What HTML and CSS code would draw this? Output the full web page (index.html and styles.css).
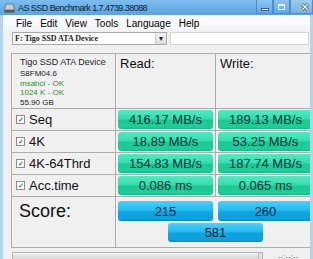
FILE: index.html
```html
<!DOCTYPE html>
<html lang="en">
  <head>
    <meta charset="UTF-8" />
    <title>AS SSD Benchmark</title>
    <link rel="stylesheet" href="styles.css">
  </head>
  <body>
    <div class="window">
      <div class="titlebar">
        <svg class="app-icon" width="11" height="11" viewBox="0 0 11 11">
          <path d="M2 2 L9 2 L10.5 8 L0.5 8 Z" fill="#c9ccd0" stroke="#6c6f73" stroke-width="0.8" />
          <rect x="0.5" y="8" width="10" height="2.5" fill="#55585c" />
        </svg>
        <span class="title">AS SSD Benchmark 1.7.4739.38088</span>
        <div class="caption-buttons">
          <span class="cap-btn"><span class="glyph-min"></span></span>
          <span class="cap-btn"><span class="glyph-max"></span></span>
          <span class="cap-btn close">
            <svg width="8" height="8" viewBox="0 0 8 8">
              <path d="M1 1 L7 7 M7 1 L1 7" stroke="#3a4a5a" stroke-width="2.6" />
              <path d="M1 1 L7 7 M7 1 L1 7" stroke="#f4f6f8" stroke-width="1.4" />
            </svg>
          </span>
        </div>
      </div>
      <div class="frame">
        <div class="menubar">
          <span>File</span>
          <span>Edit</span>
          <span>View</span>
          <span>Tools</span>
          <span>Language</span>
          <span>Help</span>
        </div>
        <div class="toolbar">
          <div class="drive-select">
            <span class="drive-name">F: Tigo SSD ATA Device</span>
            <span class="drop-btn">&#9662;</span>
          </div>
          <div class="textbox"></div>
        </div>
        <div class="results">
          <div class="cell info">
            <div class="device">Tigo SSD ATA Device</div>
            <div>S8FM04.6</div>
            <div class="ok">msahci - OK</div>
            <div class="ok">1024 K - OK</div>
            <div>55.90 GB</div>
          </div>
          <div class="cell head">Read:</div>
          <div class="cell head">Write:</div>

          <div class="cell label"><span class="check">&#10003;</span>Seq</div>
          <div class="cell value"><div class="bar">416.17 MB/s</div></div>
          <div class="cell value"><div class="bar">189.13 MB/s</div></div>

          <div class="cell label"><span class="check">&#10003;</span>4K</div>
          <div class="cell value"><div class="bar">18.89 MB/s</div></div>
          <div class="cell value"><div class="bar">53.25 MB/s</div></div>

          <div class="cell label"><span class="check">&#10003;</span>4K-64Thrd</div>
          <div class="cell value"><div class="bar">154.83 MB/s</div></div>
          <div class="cell value"><div class="bar">187.74 MB/s</div></div>

          <div class="cell label"><span class="check">&#10003;</span>Acc.time</div>
          <div class="cell value"><div class="bar">0.086 ms</div></div>
          <div class="cell value"><div class="bar">0.065 ms</div></div>

          <div class="cell score-label">Score:</div>
          <div class="cell score-values">
            <div class="score-pair">
              <div class="score">215</div>
              <div class="score">260</div>
            </div>
            <div class="score total">581</div>
          </div>
        </div>
        <div class="statusbar">
          <div class="progress"><span class="progress-end"></span></div>
          <span class="timer">--:--:--</span>
        </div>
      </div>
    </div>
  </body>
</html>
```

FILE: styles.css
```css
* {
  box-sizing: border-box;
}

body {
  margin: 0;
  width: 313px;
  height: 259px;
  overflow: hidden;
  font-family: "Liberation Sans", Arial, sans-serif;
  background-color: #f0f0f0;
}

.window {
  width: 313px;
  height: 259px;
  display: flex;
  flex-direction: column;
  overflow: hidden;
}

/* title bar */
.titlebar {
  height: 15px;
  flex: none;
  display: flex;
  align-items: center;
  padding-left: 4px;
  background: linear-gradient(#7dbcee, #5aa4e3);
}

.app-icon {
  flex: none;
}

.title {
  margin-left: 3px;
  font-size: 9px;
  letter-spacing: -0.55px;
  color: #10202f;
}

.caption-buttons {
  margin-left: auto;
  align-self: flex-start;
  display: flex;
  height: 14px;
}

.cap-btn {
  width: 17px;
  height: 14px;
  display: flex;
  align-items: center;
  justify-content: center;
  border: 1px solid #4d8fc8;
  border-top: none;
  background: linear-gradient(#8cc5f0, #62a8e4);
}

.cap-btn.close {
  width: 23px;
  justify-content: flex-start;
  padding-left: 10px;
  background: linear-gradient(#9ccbee, #78b2e2);
}

.glyph-min {
  width: 8px;
  height: 3px;
  margin-top: 5px;
  background-color: #f6f8fa;
  border: 1px solid #3f5f80;
}

.glyph-max {
  width: 7px;
  height: 6px;
  border: 1px solid #eef3f8;
  border-top-width: 2px;
}

/* window body */
.frame {
  flex: 1;
  display: flex;
  flex-direction: column;
  border-left: 3px solid #b2d5ef;
  border-right: 3px solid #b2d5ef;
  overflow: hidden;
}

.menubar {
  height: 16px;
  flex: none;
  display: flex;
  align-items: center;
  gap: 8px;
  padding-left: 13px;
  font-size: 10px;
  color: #000;
  background: linear-gradient(#fbfcfd, #f2f4f7);
}

.toolbar {
  height: 18px;
  flex: none;
  display: flex;
  padding: 1px 1px 0 9px;
  gap: 3px;
}

.drive-select {
  width: 155px;
  height: 13px;
  display: flex;
  align-items: center;
  border: 1px solid #a8a8a8;
  background-color: #fdfdfd;
}

.drive-name {
  flex: 1;
  padding-left: 2px;
  font-family: "Liberation Serif", serif;
  font-size: 8px;
  font-weight: bold;
  color: #222;
  white-space: nowrap;
}

.drop-btn {
  width: 11px;
  height: 11px;
  display: flex;
  align-items: center;
  justify-content: center;
  font-size: 8px;
  color: #222;
  border-left: 1px solid #c8c8c8;
  background: linear-gradient(#f4f4f4, #dcdcdc);
}

.textbox {
  flex: 1;
  height: 13px;
  border: 1px solid #d4d4d4;
  background-color: #fff;
}

/* results table */
.results {
  display: grid;
  grid-template-columns: 103px 99px 99px;
  grid-template-rows: 54px 21px 21px 21px 21px 50px;
  gap: 1px;
  padding: 1px;
  margin: 4px 0 0 8px;
  width: 305px;
  flex: none;
  background-color: #adadad;
}

.cell {
  background-color: #f0f0f0;
}

.info {
  padding: 2px 0 0 8px;
  font-size: 8px;
  line-height: 9.7px;
  color: #1c1c1c;
}

.info .device {
  font-size: 9px;
  line-height: 12px;
  margin-bottom: 1px;
}

.info .ok {
  color: #2f8a2f;
}

.head {
  padding: 2px 0 0 4px;
  font-size: 13px;
  line-height: 15px;
  color: #111;
}

.label {
  display: flex;
  align-items: center;
  padding-left: 4px;
  gap: 4px;
  font-size: 13px;
  color: #111;
}

.check {
  width: 9px;
  height: 9px;
  display: flex;
  align-items: center;
  justify-content: center;
  font-size: 7px;
  color: #333;
  border: 1px solid #8d8d8d;
  background-color: #fbfbfb;
}

.value {
  padding: 1px 2px;
}

.bar {
  height: 19px;
  display: flex;
  align-items: center;
  justify-content: center;
  font-size: 13px;
  color: #15303a;
  border-radius: 3px;
  background: linear-gradient(#55e8c0 0%, #36deae 45%, #1bc893 55%, #22cc98 90%, #15b583 100%);
}

.score-label {
  padding: 4px 0 0 7px;
  font-size: 18px;
  color: #111;
}

.score-values {
  grid-column: 2 / 4;
  padding-top: 4px;
  display: flex;
  flex-direction: column;
  gap: 2px;
}

.score-pair {
  display: grid;
  grid-template-columns: 99px 99px;
  column-gap: 1px;
}

.score {
  height: 20px;
  margin: 0 2px;
  display: flex;
  align-items: center;
  justify-content: center;
  font-size: 13px;
  color: #0f2740;
  border-radius: 3px;
  background: linear-gradient(#4fd0f6 0%, #22bbf0 45%, #0ea3e0 55%, #0f9fdc 90%, #0a88c2 100%);
}

.score.total {
  width: 95px;
  height: 19px;
  margin-left: 52px;
}

/* status bar */
.statusbar {
  display: flex;
  align-items: center;
  padding: 4px 0 0 9px;
  gap: 15px;
}

.progress {
  width: 251px;
  height: 8px;
  display: flex;
  justify-content: flex-end;
  border: 1px solid #b4b4b4;
  background: linear-gradient(#f2f2f2, #d6d6d6);
}

.progress-end {
  width: 4px;
  border-left: 1px solid #bdbdbd;
  background-color: #e2e2e2;
}

.timer {
  font-size: 7px;
  color: #666;
  letter-spacing: 0.3px;
}
```
